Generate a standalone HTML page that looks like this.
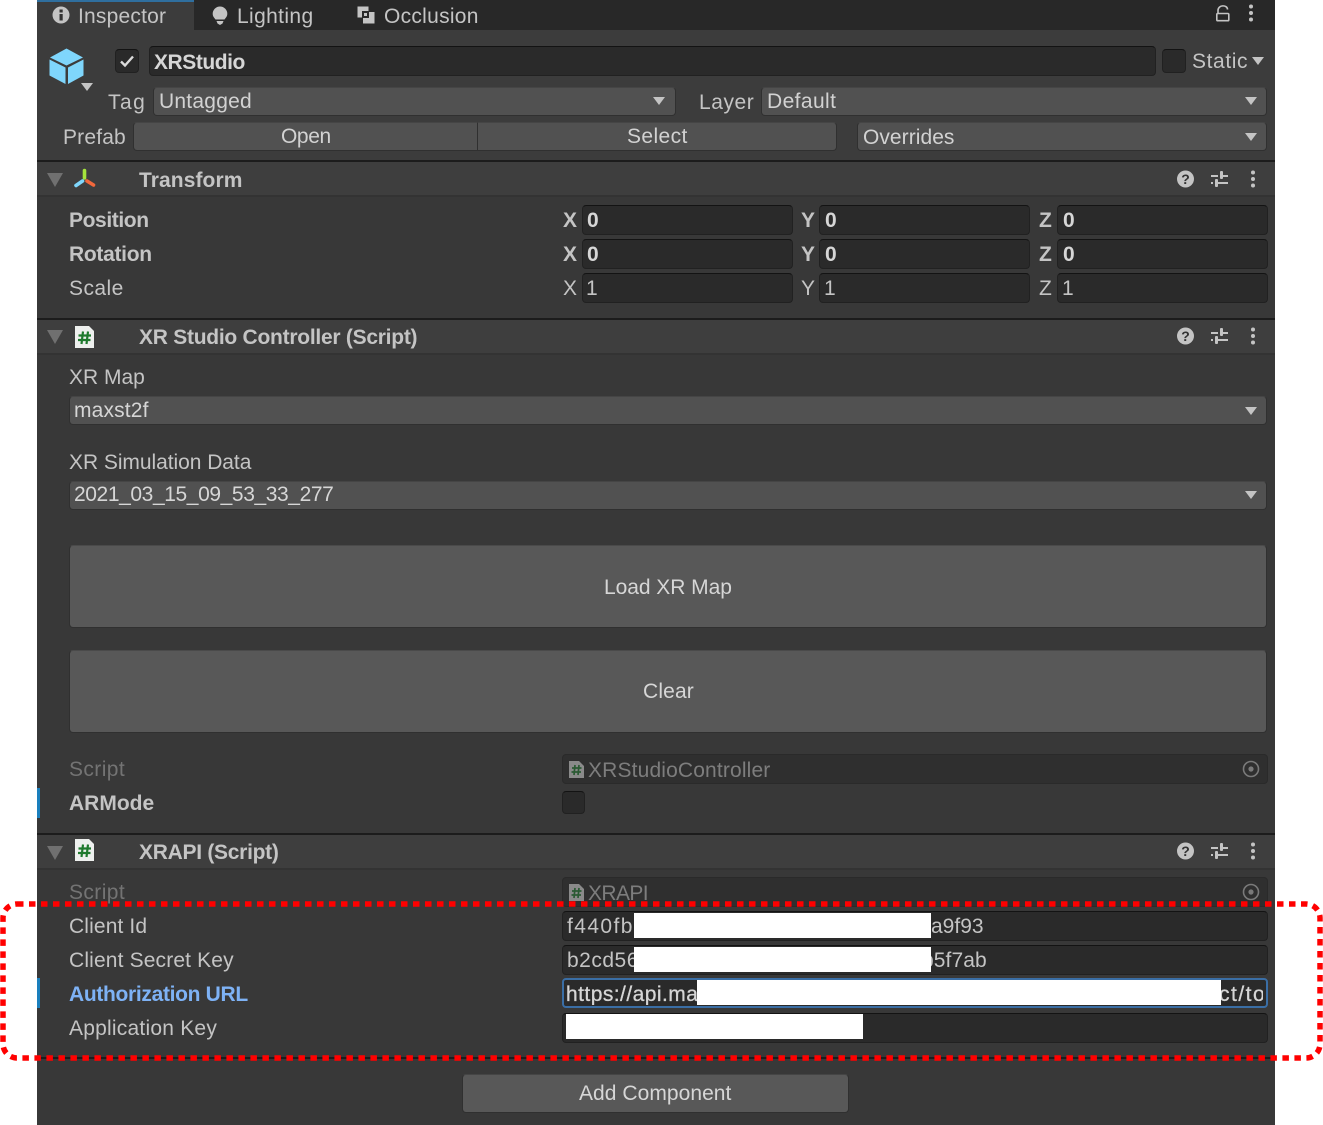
<!DOCTYPE html>
<html><head><meta charset="utf-8"><style>
html,body{margin:0;padding:0;background:#fff}
#p{position:relative;width:1323px;height:1125px;overflow:hidden;background:#fff;font-family:"Liberation Sans",sans-serif;font-size:21px;color:#c4c4c4}
#p div,#p span,#p svg{position:absolute}
.t{white-space:nowrap;line-height:28px;height:28px;margin-top:1px}
.b{font-weight:bold}
.f{background:#2a2a2a;border:1px solid #212121;border-top-color:#131313;border-radius:4px;box-sizing:border-box;height:30px}
.d{background:#515151;border:1px solid #303030;border-top-color:#454545;border-radius:4px;box-sizing:border-box;height:29px}
.h{left:37px;width:1238px;background:#3e3e3e;border-top:2px solid #1c1c1c;border-bottom:2px solid #333;box-sizing:border-box;height:37px}
.tri{width:0;height:0;border-left:6.5px solid transparent;border-right:6.5px solid transparent;border-top:8px solid #c4c4c4}
.ft{width:0;height:0;border-left:8px solid transparent;border-right:8px solid transparent;border-top:14px solid #707070}
.btn{left:69px;width:1198px;height:83px;background:#585858;border:1px solid #303030;border-top-color:#4a4a4a;border-radius:4px;box-sizing:border-box}
.w{background:#fff}
</style></head><body><div id="p">
<div style="left:37px;top:0;width:1238px;height:1125px;background:#383838"></div>
<div style="left:37px;top:0;width:1238px;height:30px;background:#282828"></div>
<div style="left:37px;top:0;width:157px;height:30px;background:#3c3c3c;border-top:2px solid #2f6f9f;box-sizing:border-box"></div>
<div style="left:37px;top:30px;width:1238px;height:131px;background:#3c3c3c"></div>

<svg style="left:52px;top:6px" width="18" height="18" viewBox="0 0 18 18"><circle cx="9" cy="9" r="8.5" fill="#c4c4c4"/><rect x="7.5" y="8" width="3.2" height="6.5" fill="#333"/><rect x="7.5" y="3.5" width="3.2" height="3" fill="#333"/></svg>
<span class="t" style="left:78px;top:2px;letter-spacing:.2px">Inspector</span>
<svg style="left:211px;top:6px" width="18" height="21" viewBox="0 0 18 21"><path d="M9 0.5a7.3 7.3 0 0 0-7.3 7.3c0 2.8 1.6 4 2.8 5.7h9c1.2-1.7 2.8-2.9 2.8-5.7A7.3 7.3 0 0 0 9 .5z" fill="#c4c4c4"/><path d="M5.5 15h7l-1 2.5-2.5 1.500-2.500-1.500z" fill="#c4c4c4"/></svg>
<span class="t" style="left:237px;top:2px;letter-spacing:.37px">Lighting</span>
<svg style="left:357px;top:6px" width="18" height="18" viewBox="0 0 18 18"><rect x="0.5" y="0.5" width="11" height="11" fill="#c4c4c4"/><rect x="6" y="6" width="11.5" height="11.5" fill="#c4c4c4"/><rect x="5" y="5" width="7" height="7" fill="#282828"/><rect x="7" y="7" width="3" height="3" fill="#c4c4c4"/></svg>
<span class="t" style="left:384px;top:2px;letter-spacing:.28px">Occlusion</span>
<svg style="left:1214px;top:4px" width="17" height="19" viewBox="0 0 17 19" fill="none" stroke="#c4c4c4" stroke-width="1.6"><rect x="2.800" y="9.500" width="12" height="7.200" rx="1"/><path d="M4 9.500V6.500C4 .5 13.500 .5 13.500 5.500"/></svg>
<svg style="left:1247px;top:4px" width="8" height="19" viewBox="0 0 8 19" fill="#c4c4c4"><circle cx="4" cy="2.500" r="2"/><circle cx="4" cy="9" r="2"/><circle cx="4" cy="15.500" r="2"/></svg>

<svg style="left:49px;top:48px" width="36" height="37" viewBox="0 0 36 37"><path d="M17.5 0.5 34 9.5 17.5 17.5 1 9.5z" fill="#7fd6fc"/><path d="M0.5 11.5 16.5 19.5V36L0.5 27.5z" fill="#7fd6fc"/><path d="M34.5 11.5 19 19.5V36L34.5 27.5z" fill="#7fd6fc"/></svg>
<div class="tri" style="left:81px;top:83px"></div>
<div class="f" style="left:115px;top:49px;width:24px;height:24px"></div>
<svg style="left:118px;top:52px" width="18" height="18" viewBox="0 0 18 18" fill="none" stroke="#dcdcdc" stroke-width="2.4"><path d="M3 9.5 7 13.5 15 4.5"/></svg>
<div class="f" style="left:149px;top:46px;width:1007px"></div>
<span class="t b" style="left:154px;top:48px;color:#d6d6d6;letter-spacing:-.45px">XRStudio</span>
<div class="f" style="left:1162px;top:49px;width:24px;height:24px"></div>
<span class="t" style="left:1192px;top:47px;letter-spacing:.6px">Static</span>
<div class="tri" style="left:1252px;top:57px"></div>
<span class="t" style="left:108px;top:88px;letter-spacing:1.5px">Tag</span>
<div class="d" style="left:153px;top:87px;width:523px"></div>
<span class="t" style="left:159px;top:87px;color:#d2d2d2;letter-spacing:.23px">Untagged</span>
<div class="tri" style="left:653px;top:97px"></div>
<span class="t" style="left:699px;top:88px;letter-spacing:.55px">Layer</span>
<div class="d" style="left:761px;top:87px;width:506px"></div>
<span class="t" style="left:767px;top:87px;color:#d2d2d2;letter-spacing:.4px">Default</span>
<div class="tri" style="left:1245px;top:97px"></div>
<span class="t" style="left:63px;top:123px;letter-spacing:.17px">Prefab</span>
<div class="d" style="left:133px;top:122px;width:345px;border-radius:4px 0 0 4px"></div>
<div class="d" style="left:477px;top:122px;width:360px;border-radius:0 4px 4px 0"></div>
<span class="t" style="left:281px;top:122px;color:#d2d2d2;letter-spacing:-.4px">Open</span>
<span class="t" style="left:627px;top:122px;color:#d2d2d2;letter-spacing:.4px">Select</span>
<div class="d" style="left:857px;top:122px;width:410px"></div>
<span class="t" style="left:863px;top:123px;color:#d2d2d2;letter-spacing:.05px">Overrides</span>
<div class="tri" style="left:1245px;top:133px"></div>

<div class="h" style="top:160px"></div>
<div class="ft" style="left:47px;top:173px"></div>
<svg style="left:73px;top:168px" width="23" height="21" viewBox="0 0 23 21" fill="none" stroke-width="3.6" stroke-linecap="round"><path d="M11.5 2.5V10" stroke="#a5e43c"/><path d="M9.5 13 3 17.5" stroke="#7fd6fc"/><path d="M14 13 20.5 17" stroke="#f2683c"/></svg>
<span class="t b" style="left:139px;top:166px;letter-spacing:.09px">Transform</span>

<span class="t b" style="left:69px;top:206px;letter-spacing:-.4px">Position</span>
<span class="t b" style="left:69px;top:240px;letter-spacing:-.3px">Rotation</span>
<span class="t" style="left:69px;top:274px;letter-spacing:.45px">Scale</span>
<span class="t b" style="left:563px;top:206px">X</span><div class="f" style="left:582px;top:205px;width:211px"></div><span class="t b" style="left:587px;top:206px;color:#d6d6d6">0</span>
<span class="t b" style="left:801px;top:206px">Y</span><div class="f" style="left:819px;top:205px;width:211px"></div><span class="t b" style="left:825px;top:206px;color:#d6d6d6">0</span>
<span class="t b" style="left:1039px;top:206px">Z</span><div class="f" style="left:1057px;top:205px;width:211px"></div><span class="t b" style="left:1063px;top:206px;color:#d6d6d6">0</span>
<span class="t b" style="left:563px;top:240px">X</span><div class="f" style="left:582px;top:239px;width:211px"></div><span class="t b" style="left:587px;top:240px;color:#d6d6d6">0</span>
<span class="t b" style="left:801px;top:240px">Y</span><div class="f" style="left:819px;top:239px;width:211px"></div><span class="t b" style="left:825px;top:240px;color:#d6d6d6">0</span>
<span class="t b" style="left:1039px;top:240px">Z</span><div class="f" style="left:1057px;top:239px;width:211px"></div><span class="t b" style="left:1063px;top:240px;color:#d6d6d6">0</span>
<span class="t" style="left:563px;top:274px">X</span><div class="f" style="left:582px;top:273px;width:211px"></div><span class="t" style="left:586px;top:274px">1</span>
<span class="t" style="left:801px;top:274px">Y</span><div class="f" style="left:819px;top:273px;width:211px"></div><span class="t" style="left:824px;top:274px">1</span>
<span class="t" style="left:1039px;top:274px">Z</span><div class="f" style="left:1057px;top:273px;width:211px"></div><span class="t" style="left:1062px;top:274px">1</span>

<div class="h" style="top:318px"></div>
<div class="ft" style="left:47px;top:330px"></div>
<svg style="left:74px;top:326px" width="21" height="23" viewBox="0 0 21 23"><path d="M1 0H15L20 5V22H1z" fill="#eef0ee"/><path d="M9 5.500 7.500 18M14 5.500 12.500 18M4.500 9.500H17M4 14H16.500" stroke="#1f7a2e" stroke-width="2.200" fill="none"/></svg>
<span class="t b" style="left:139px;top:323px;letter-spacing:-.26px">XR Studio Controller (Script)</span>

<span class="t" style="left:69px;top:363px">XR Map</span>
<div class="d" style="left:69px;top:396px;width:1198px"></div>
<span class="t" style="left:74px;top:396px;color:#d6d6d6;letter-spacing:.15px">maxst2f</span>
<div class="tri" style="left:1245px;top:407px"></div>
<span class="t" style="left:69px;top:448px;letter-spacing:-.05px">XR Simulation Data</span>
<div class="d" style="left:69px;top:481px;width:1198px"></div>
<span class="t" style="left:74px;top:480px;color:#d6d6d6;letter-spacing:-.4px">2021_03_15_09_53_33_277</span>
<div class="tri" style="left:1245px;top:491px"></div>

<div class="btn" style="top:545px"></div>
<span class="t" style="left:604px;top:573px;color:#d6d6d6;letter-spacing:-.05px">Load XR Map</span>
<div class="btn" style="top:650px"></div>
<span class="t" style="left:643px;top:677px;color:#d6d6d6;letter-spacing:.15px">Clear</span>

<span class="t" style="left:69px;top:755px;color:#737373;letter-spacing:.4px">Script</span>
<div class="f" style="left:562px;top:754px;width:706px;background:#2f2f2f;border-color:#2a2a2a"></div>
<svg style="left:569px;top:761px" width="15" height="17" viewBox="0 0 15 17"><path d="M0 0H10L15 5V17H0z" fill="#8a8a8a"/><path d="M6 4 5 14M10 4 9 14M3 7H12.500M2.500 11H12" stroke="#2b5a33" stroke-width="1.700" fill="none"/></svg>
<span class="t" style="left:588px;top:756px;color:#7d7d7d;letter-spacing:.15px">XRStudioController</span>
<svg style="left:1242px;top:760px" width="18" height="18" viewBox="0 0 18 18" fill="none"><circle cx="9" cy="9" r="7.5" stroke="#7a7a7a" stroke-width="1.6"/><circle cx="9" cy="9" r="2.6" fill="#7a7a7a"/></svg>
<div style="left:37px;top:788px;width:3px;height:30px;background:#1a7fbd"></div>
<span class="t b" style="left:69px;top:789px">ARMode</span>
<div class="f" style="left:562px;top:791px;width:23px;height:23px"></div>

<div class="h" style="top:833px"></div>
<div class="ft" style="left:47px;top:846px"></div>
<svg style="left:74px;top:839px" width="21" height="23" viewBox="0 0 21 23"><path d="M1 0H15L20 5V22H1z" fill="#eef0ee"/><path d="M9 5.500 7.500 18M14 5.500 12.500 18M4.500 9.500H17M4 14H16.500" stroke="#1f7a2e" stroke-width="2.200" fill="none"/></svg>
<span class="t b" style="left:139px;top:838px;letter-spacing:-.28px">XRAPI (Script)</span>

<svg style="left:1177px;top:170px" width="18" height="18" viewBox="0 0 18 18"><circle cx="8.500" cy="9" r="8.500" fill="#c4c4c4"/><text x="8.500" y="14" text-anchor="middle" font-family="Liberation Sans" font-weight="bold" font-size="14" fill="#333">?</text></svg>
<svg style="left:1177px;top:327px" width="18" height="18" viewBox="0 0 18 18"><circle cx="8.500" cy="9" r="8.500" fill="#c4c4c4"/><text x="8.500" y="14" text-anchor="middle" font-family="Liberation Sans" font-weight="bold" font-size="14" fill="#333">?</text></svg>
<svg style="left:1177px;top:842px" width="18" height="18" viewBox="0 0 18 18"><circle cx="8.500" cy="9" r="8.500" fill="#c4c4c4"/><text x="8.500" y="14" text-anchor="middle" font-family="Liberation Sans" font-weight="bold" font-size="14" fill="#333">?</text></svg>
<svg style="left:1210px;top:170px" width="19" height="18" viewBox="0 0 19 18" fill="#c4c4c4"><rect x="1" y="5" width="7" height="2"/><rect x="13" y="5" width="5" height="2"/><rect x="10" y="1" width="3" height="8" rx="1"/><rect x="1" y="12" width="2" height="2"/><rect x="8" y="12" width="10" height="2"/><rect x="5" y="9" width="3" height="8" rx="1"/></svg>
<svg style="left:1210px;top:327px" width="19" height="18" viewBox="0 0 19 18" fill="#c4c4c4"><rect x="1" y="5" width="7" height="2"/><rect x="13" y="5" width="5" height="2"/><rect x="10" y="1" width="3" height="8" rx="1"/><rect x="1" y="12" width="2" height="2"/><rect x="8" y="12" width="10" height="2"/><rect x="5" y="9" width="3" height="8" rx="1"/></svg>
<svg style="left:1210px;top:842px" width="19" height="18" viewBox="0 0 19 18" fill="#c4c4c4"><rect x="1" y="5" width="7" height="2"/><rect x="13" y="5" width="5" height="2"/><rect x="10" y="1" width="3" height="8" rx="1"/><rect x="1" y="12" width="2" height="2"/><rect x="8" y="12" width="10" height="2"/><rect x="5" y="9" width="3" height="8" rx="1"/></svg>
<svg style="left:1249px;top:170px" width="8" height="19" viewBox="0 0 8 19" fill="#c4c4c4"><circle cx="4" cy="2.500" r="2"/><circle cx="4" cy="9" r="2"/><circle cx="4" cy="15.500" r="2"/></svg>
<svg style="left:1249px;top:327px" width="8" height="19" viewBox="0 0 8 19" fill="#c4c4c4"><circle cx="4" cy="2.500" r="2"/><circle cx="4" cy="9" r="2"/><circle cx="4" cy="15.500" r="2"/></svg>
<svg style="left:1249px;top:842px" width="8" height="19" viewBox="0 0 8 19" fill="#c4c4c4"><circle cx="4" cy="2.500" r="2"/><circle cx="4" cy="9" r="2"/><circle cx="4" cy="15.500" r="2"/></svg>

<span class="t" style="left:69px;top:878px;color:#737373;letter-spacing:.4px">Script</span>
<div class="f" style="left:562px;top:877px;width:706px;background:#2f2f2f;border-color:#2a2a2a"></div>
<svg style="left:569px;top:884px" width="15" height="17" viewBox="0 0 15 17"><path d="M0 0H10L15 5V17H0z" fill="#8a8a8a"/><path d="M6 4 5 14M10 4 9 14M3 7H12.500M2.500 11H12" stroke="#2b5a33" stroke-width="1.700" fill="none"/></svg>
<span class="t" style="left:588px;top:879px;color:#7d7d7d;letter-spacing:-.6px">XRAPI</span>
<svg style="left:1242px;top:883px" width="18" height="18" viewBox="0 0 18 18" fill="none"><circle cx="9" cy="9" r="7.5" stroke="#7a7a7a" stroke-width="1.6"/><circle cx="9" cy="9" r="2.6" fill="#7a7a7a"/></svg>

<span class="t" style="left:69px;top:912px;letter-spacing:.13px">Client Id</span>
<div class="f" style="left:562px;top:911px;width:706px"></div>
<span class="t" style="left:567px;top:912px;letter-spacing:1.4px">f440fb</span>
<div class="w" style="left:634px;top:913px;width:297px;height:25px"></div>
<span class="t" style="left:931px;top:912px">a9f93</span>
<span class="t" style="left:69px;top:946px;letter-spacing:.15px">Client Secret Key</span>
<div class="f" style="left:562px;top:945px;width:706px"></div>
<span class="t" style="left:567px;top:946px;letter-spacing:.5px">b2cd56</span>
<span class="t" style="left:922px;top:946px;letter-spacing:.1px">b5f7ab</span>
<div class="w" style="left:634px;top:947px;width:297px;height:25px"></div>
<div style="left:37px;top:978px;width:3px;height:30px;background:#1a7fbd"></div>
<span class="t b" style="left:69px;top:980px;color:#7eb2f5;letter-spacing:-.32px">Authorization URL</span>
<div class="f" style="left:562px;top:978px;width:706px;border:2px solid #3a6ea5"></div>
<div style="left:565px;top:981px;width:698px;height:24px;overflow:hidden"><span class="t" style="left:1px;top:-1px;color:#d6d6d6;letter-spacing:.45px;-webkit-text-stroke:.3px #d6d6d6">https://api.ma</span><span class="t" style="left:654px;top:-1px;color:#d6d6d6;letter-spacing:1.5px;-webkit-text-stroke:.3px #d6d6d6">ct/to</span></div>
<div class="w" style="left:697px;top:980px;width:524px;height:25px"></div>
<span class="t" style="left:69px;top:1014px;letter-spacing:.22px">Application Key</span>
<div class="f" style="left:562px;top:1013px;width:706px"></div>
<div class="w" style="left:566px;top:1014px;width:297px;height:25px"></div>

<div style="left:37px;top:1057px;width:1238px;height:2px;background:#1c1c1c"></div>
<div class="d" style="left:462px;top:1074px;width:387px;height:39px;background:#585858"></div>
<span class="t" style="left:579px;top:1079px;color:#d6d6d6;letter-spacing:.05px">Add Component</span>

<svg style="left:0;top:0" width="1323" height="1125" fill="none"><rect x="3" y="904" width="1317" height="154" rx="14" stroke="#ff0000" stroke-width="5.500" stroke-dasharray="6.500 5.500"/></svg>
</div></body></html>
